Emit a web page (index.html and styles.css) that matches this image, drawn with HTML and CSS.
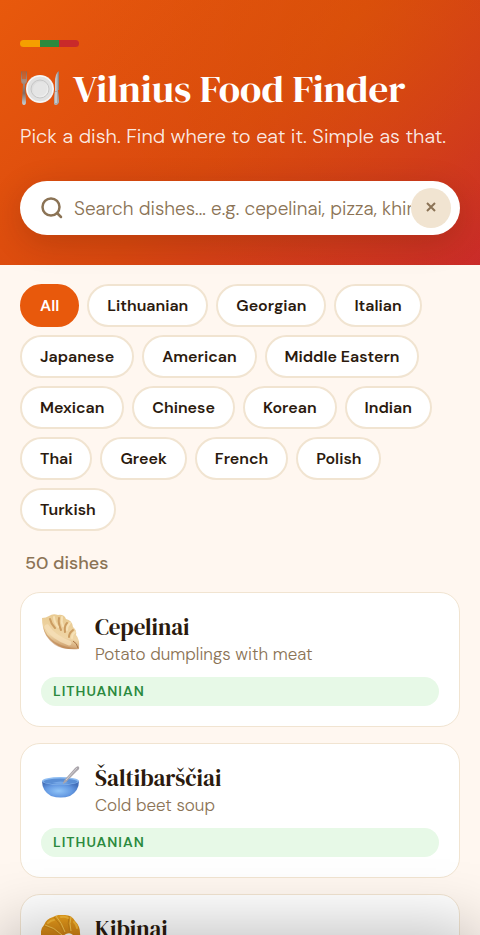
FILE: index.html
```html
<!DOCTYPE html>
<html lang="en">
<head>
<meta charset="UTF-8" />
<meta name="viewport" content="width=device-width, initial-scale=1" />
<title>Vilnius Food Finder</title>
<link rel="stylesheet" href="styles.css">
</head>
<body>

<header class="hero">
  <div class="flag"><span class="flag-yellow"></span><span class="flag-green"></span><span class="flag-red"></span></div>
  <h1 class="hero-title">
    <svg class="plate-icon" viewBox="0 1 40 36" aria-hidden="true">
      <defs>
        <linearGradient id="steel" x1="0" y1="0" x2="0" y2="1">
          <stop offset="0" stop-color="#8d6450" />
          <stop offset="0.3" stop-color="#a98f82" />
          <stop offset="0.65" stop-color="#806b63" />
          <stop offset="1" stop-color="#c9d2d8" />
        </linearGradient>
        <linearGradient id="blade" x1="0" y1="0" x2="1" y2="0">
          <stop offset="0" stop-color="#e8e6e4" />
          <stop offset="0.6" stop-color="#b5b5b7" />
          <stop offset="1" stop-color="#827a78" />
        </linearGradient>
        <linearGradient id="china" x1="0" y1="0" x2="1" y2="1">
          <stop offset="0" stop-color="#d6d6d6" />
          <stop offset="1" stop-color="#f4f4f4" />
        </linearGradient>
      </defs>
      <path d="M1 2V10Q1 13 3 14L2 32Q2 35 4 35T6 32L5 14Q7 13 7 10V2L6 1V9H5.400V1H4.600V9H3.400V1H2.600V9H2V1Z" fill="url(#steel)" />
      <circle cx="20" cy="19" r="14" fill="#eeeeee" />
      <circle cx="20" cy="19" r="13" fill="#e1e1e1" stroke="#fafafa" />
      <circle cx="20" cy="19" r="9" fill="url(#china)" stroke="#c7c7c7" />
      <circle cx="20" cy="19" r="7" fill="#e5e5e5" />
      <path d="M39 1Q35 3 35 13V20L34 32Q34 35 36 35T39 32L38 20H39Z" fill="url(#blade)" />
      <path d="M35 21H38L39 32Q38 35 36 35T34 32Z" fill="#a9a7a8" />
      <path d="M36 22V33" stroke="#e7eaec" stroke-width="1" />
    </svg>
    <span>Vilnius Food Finder</span>
  </h1>
  <p class="hero-subtitle">Pick a dish. Find where to eat it. Simple as that.</p>
  <form class="search" role="search">
    <svg class="search-icon" viewBox="0 0 24 24" aria-hidden="true">
      <circle cx="11" cy="11" r="8.500" />
      <path d="M17 17l4 4" />
    </svg>
    <input class="search-input" type="text" aria-label="Search dishes" placeholder="Search dishes... e.g. cepelinai, pizza, khinkali" />
    <button class="search-clear" type="reset" aria-label="Clear search">
      <svg viewBox="0 0 12 12" aria-hidden="true"><path d="M2 1l8 8M10 1l-8 8" /></svg>
    </button>
  </form>
</header>

<main class="content">
  <nav class="filters" aria-label="Cuisine">
    <button class="chip active" type="button">All</button>
    <button class="chip" type="button">Lithuanian</button>
    <button class="chip" type="button">Georgian</button>
    <button class="chip" type="button">Italian</button>
    <button class="chip" type="button">Japanese</button>
    <button class="chip" type="button">American</button>
    <button class="chip" type="button">Middle Eastern</button>
    <button class="chip" type="button">Mexican</button>
    <button class="chip" type="button">Chinese</button>
    <button class="chip" type="button">Korean</button>
    <button class="chip" type="button">Indian</button>
    <button class="chip" type="button">Thai</button>
    <button class="chip" type="button">Greek</button>
    <button class="chip" type="button">French</button>
    <button class="chip" type="button">Polish</button>
    <button class="chip" type="button">Turkish</button>
  </nav>

  <p class="count">50 dishes</p>

  <div class="dishes">
    <article class="card">
      <div class="card-top">
        <svg class="dish-icon" viewBox="0 1 40 40" aria-hidden="true">
          <defs>
            <linearGradient id="dough" x1="0.600" y1="0.100" x2="0.400" y2="1">
              <stop offset="0" stop-color="#e9cb93" />
              <stop offset="0.6" stop-color="#efd5a6" />
              <stop offset="1" stop-color="#c08a58" />
            </linearGradient>
          </defs>
          <path d="M1 6Q5 6 8 4Q12 1 17 3Q23 2 25 7Q31 8 32 15Q36 18 35 23Q39 27 38 37Q30 38 22 36Q11 32 5 23Q1 16 1 6Z" fill="url(#dough)" />
          <path d="M2 14Q5 24 14 30Q24 36 37 36Q24 39 14 33Q3 25 2 14Z" fill="#b98150" opacity="0.500" />
          <path d="M9 7Q10 12 14 16M18 6Q17 11 20 18M26 11Q23 14 24 20M32 18Q28 21 28 25" fill="none" stroke="#cb9c61" stroke-width="2" stroke-linecap="round" />
          <path d="M13 5Q13 10 17 15M21 5Q20 10 22 14M29 11Q26 14 26 18M34 20Q31 22 31 26" fill="none" stroke="#f6e1b6" stroke-width="2" stroke-linecap="round" />
          <path d="M6 15Q12 25 28 31" fill="none" stroke="#f5dfb8" stroke-width="5" stroke-linecap="round" opacity="0.800" />
          <path d="M32 29Q36 31 37 36" fill="none" stroke="#a87343" stroke-width="1" />
        </svg>
        <div>
          <h2 class="dish-name">Cepelinai</h2>
          <p class="dish-desc">Potato dumplings with meat</p>
        </div>
      </div>
      <span class="tag">Lithuanian</span>
    </article>

    <article class="card">
      <div class="card-top">
        <svg class="dish-icon" viewBox="0 1 40 40" aria-hidden="true">
          <defs>
            <radialGradient id="bowl" cx="0.450" cy="0.600" r="0.600">
              <stop offset="0" stop-color="#91c5f8" />
              <stop offset="0.6" stop-color="#6499e2" />
              <stop offset="1" stop-color="#436fb9" />
            </radialGradient>
          </defs>
          <path d="M1 18H38Q38 28 29 33Q20 36 10 33Q1 28 1 18Z" fill="url(#bowl)" />
          <ellipse cx="19.500" cy="18" rx="18.500" ry="4" fill="#8fbdf2" />
          <ellipse cx="19.500" cy="18.500" rx="17" ry="3" fill="#5b8fd5" />
          <path d="M11 20Q20 17 28 20Q20 22 11 20Z" fill="#76a8e8" />
          <path d="M22 20Q23 17 26 14L34 5Q37 2 38 4T36 8L28 16Q25 20 22 21Z" fill="#aaa5ab" />
          <path d="M25 17L36 5" stroke="#d3d0d3" stroke-width="1" />
        </svg>
        <div>
          <h2 class="dish-name">Šaltibarščiai</h2>
          <p class="dish-desc">Cold beet soup</p>
        </div>
      </div>
      <span class="tag">Lithuanian</span>
    </article>

    <article class="card">
      <div class="card-top">
        <svg class="dish-icon" viewBox="0 2 40 40" aria-hidden="true">
          <defs>
            <linearGradient id="crust" x1="0" y1="0" x2="0" y2="1">
              <stop offset="0" stop-color="#eca21c" />
              <stop offset="1" stop-color="#c06f10" />
            </linearGradient>
          </defs>
          <path d="M0 24Q-1 16 3 12Q5 6 12 4Q17 1 24 2Q31 2 34 8Q39 13 39 20Q40 28 36 31Q31 31 32 22Q29 19 25 21Q21 23 20 28Q15 35 8 34Q1 32 0 24Z" fill="url(#crust)" />
          <path d="M3 13Q12 15 20 23M13 4Q19 10 23 20M28 3Q26 10 29 19" fill="none" stroke="#c98416" stroke-width="1" />
          <path d="M4 12Q13 14 21 22M15 3Q21 10 24 19M30 4Q28 10 30 18" fill="none" stroke="#f4c552" stroke-width="1" />
          <path d="M7 10Q10 7 13 7M20 4Q24 3 27 5M33 9Q36 12 36 15" fill="none" stroke="#f4b636" stroke-width="2" stroke-linecap="round" />
        </svg>
        <div>
          <h2 class="dish-name">Kibinai</h2>
        </div>
      </div>
    </article>
  </div>
</main>

<div class="sheet" aria-hidden="true"></div>

</body>
</html>
```
FILE: styles.css
```css
* {
  box-sizing: border-box;
  margin: 0;
  padding: 0;
}
body {
  font-family: 'DM Sans', Inter, 'Open Sans', sans-serif;
  background: #fff7f0;
  color: #2b1a0e;
  height: 100vh;
  display: flex;
  flex-direction: column;
  overflow: hidden;
}
button, input {
  font-family: inherit;
}

/* Header */
.hero {
  flex-shrink: 0;
  padding: 40px 20px 30px;
  background:
    radial-gradient(circle at 75% 10%, rgba(220, 95, 0, 0.35), transparent 65%),
    linear-gradient(135deg, #e8590c 0%, #d9480f 50%, #c92a2a 100%);
}
.flag {
  display: flex;
  width: 59px;
  height: 7px;
  border-radius: 4px;
  overflow: hidden;
}
.flag span {
  flex: 1;
}
.flag-yellow {
  background: #f59f00;
}
.flag-green {
  background: #2b8a3e;
}
.flag-red {
  background: #c92a2a;
}
.hero-title {
  display: flex;
  align-items: center;
  gap: 13px;
  margin-top: 18px;
  font-family: 'DM Serif Display', 'Liberation Serif', serif;
  font-size: 39px;
  font-weight: 400;
  line-height: 48px;
  color: #fff;
  white-space: nowrap;
}
.plate-icon {
  width: 40px;
  height: 36px;
  flex-shrink: 0;
}
.hero-subtitle {
  margin-top: 9px;
  font-size: 20px;
  font-weight: 300;
  line-height: 28px;
  color: rgba(255, 255, 255, 0.9);
}
.search {
  display: flex;
  align-items: center;
  height: 54px;
  margin-top: 31px;
  padding: 0 9px 0 20px;
  background: #fff;
  border-radius: 27px;
  box-shadow: 0 8px 32px rgba(60, 20, 0, 0.2);
}
.search-icon {
  width: 24px;
  height: 24px;
  margin-right: 10px;
  flex-shrink: 0;
  fill: none;
  stroke: #8b7355;
  stroke-width: 2.5;
  stroke-linecap: round;
}
.search-input {
  flex: 1;
  min-width: 0;
  height: 100%;
  border: none;
  outline: none;
  background: none;
  font-size: 19px;
  font-weight: 300;
  color: #2b1a0e;
}
.search-input::placeholder {
  color: #8b7355;
  opacity: 1;
}
.search-clear {
  display: grid;
  place-items: center;
  width: 40px;
  height: 40px;
  flex-shrink: 0;
  border: none;
  border-radius: 50%;
  background: #f1e4d1;
  cursor: pointer;
}
.search-clear svg {
  width: 12px;
  height: 12px;
  fill: none;
  stroke: #8b7355;
  stroke-width: 2;
}

/* List */
.content {
  flex: 1;
  min-height: 0;
  padding: 19px 20px;
  overflow: hidden auto;
  scrollbar-width: none;
}
.filters {
  display: flex;
  flex-wrap: wrap;
  gap: 8px;
}
.chip {
  height: 43px;
  padding: 0 18px;
  border: 2px solid #f1e4d1;
  border-radius: 22px;
  background: #fff;
  font-size: 16px;
  font-weight: 600;
  color: #2b1a0e;
  cursor: pointer;
}
.chip.active {
  background: #e8590c;
  border-color: #e8590c;
  color: #fff;
}
.count {
  margin: 19px 0 16px;
  padding-left: 5px;
  font-size: 18px;
  font-weight: 500;
  line-height: 26px;
  color: #8b7355;
}
.dishes {
  display: grid;
  gap: 16px;
}
.card {
  padding: 20px;
  background: #fff;
  border: 1px solid #f1e4d1;
  border-radius: 20px;
}
.card-top {
  display: flex;
  align-items: flex-start;
  gap: 14px;
}
.dish-icon {
  width: 40px;
  height: 40px;
  flex-shrink: 0;
}
.dish-name {
  font-family: 'DM Serif Display', 'Liberation Serif', serif;
  font-size: 23px;
  font-weight: 400;
  line-height: 28px;
}
.dish-desc {
  font-size: 17px;
  font-weight: 300;
  line-height: 26px;
  color: #8b7355;
}
.tag {
  display: block;
  margin-top: 10px;
  padding: 0 12px;
  border-radius: 15px;
  background: #e7f9e7;
  font-size: 14px;
  font-weight: 600;
  line-height: 29px;
  letter-spacing: 1px;
  text-transform: uppercase;
  color: #2b8a3e;
}

/* Closed bottom sheet, only its shadow reaches the page */
.sheet {
  position: fixed;
  top: 100%;
  left: 0;
  right: 0;
  height: 70vh;
  background: #fff;
  box-shadow: 0 -8px 60px rgba(0, 0, 0, 0.25);
}
```
